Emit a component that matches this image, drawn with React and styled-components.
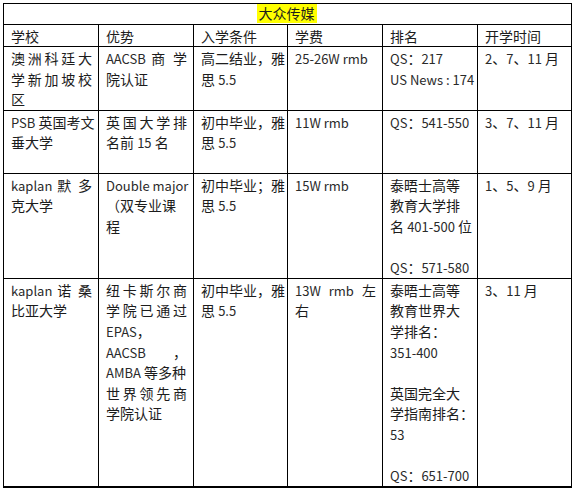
import styled, { createGlobalStyle } from "styled-components";

const GlobalStyle = createGlobalStyle`
  html, body {
    margin: 0;
    padding: 0;
    background: #fff;
  }
  body {
    font-family: "Noto Sans CJK SC", "Noto Sans", sans-serif;
    color: #1c1c1c;
  }
`;

const columns = [95, 95, 94, 95, 95, 94];
const headers = ["学校", "优势", "入学条件", "学费", "排名", "开学时间"];

// each cell is a list of lines; "~" marks a line spread to both edges, "" is a blank line
const rows = [
  {
    height: 63,
    cells: [
      ["~澳洲科廷大", "~学新加坡校", "区"],
      ["~AACSB 商 学", "院认证"],
      ["高二结业，雅", "思 5.5"],
      ["25-26W rmb"],
      ["QS：217", "US News : 174"],
      ["2、7、11 月"],
    ],
  },
  {
    height: 63,
    cells: [
      ["PSB 英国考文", "垂大学"],
      ["~英国大学排", "名前 15 名"],
      ["初中毕业，雅", "思 5.5"],
      ["11W rmb"],
      ["QS：541-550"],
      ["3、7、11 月"],
    ],
  },
  {
    height: 105,
    cells: [
      ["~kaplan 默 多", "克大学"],
      ["Double major", "（双专业课", "程"],
      ["初中毕业；雅", "思 5.5"],
      ["15W rmb"],
      ["泰晤士高等", "教育大学排", "名 401-500 位", "", "QS：571-580"],
      ["1、5、9 月"],
    ],
  },
  {
    height: 209,
    cells: [
      ["~kaplan 诺 桑", "比亚大学"],
      [
        "~纽卡斯尔商",
        "~学院已通过",
        "EPAS，",
        "~AACSB ，",
        "AMBA 等多种",
        "~世界领先商",
        "学院认证",
      ],
      ["初中毕业，雅", "思 5.5"],
      ["~13W rmb 左", "右"],
      [
        "泰晤士高等",
        "教育世界大",
        "学排名：",
        "351-400",
        "",
        "英国完全大",
        "学指南排名：",
        "53",
        "",
        "QS：651-700",
      ],
      ["3、11 月"],
    ],
  },
];

// latin runs are set a size smaller, like Calibri beside the Chinese text
function Runs({ text }) {
  return text
    .split(/([\x21-\x7e][\x20-\x7e]*[\x21-\x7e]|[\x21-\x7e])/)
    .map((part, i) =>
      /[\x21-\x7e]/.test(part) ? <Latin key={i}>{part}</Latin> : part
    );
}

function App() {
  return (
    <>
      <GlobalStyle />
      <Page>
        <Table>
          <colgroup>
            {columns.map((w, i) => (
              <col key={i} style={{ width: w }} />
            ))}
          </colgroup>
          <tbody>
            <TitleRow>
              <TitleCell colSpan={6}>
                <Highlight>大众传媒</Highlight>
              </TitleCell>
            </TitleRow>
            <HeaderRow>
              {headers.map((h) => (
                <HeaderCell key={h}>{h}</HeaderCell>
              ))}
            </HeaderRow>
            {rows.map((row, r) => (
              <BodyRow key={r} $height={row.height}>
                {row.cells.map((lines, c) => (
                  <Cell key={c}>
                    {lines.map((line, l) =>
                      line === "" ? (
                        <Line key={l}>&nbsp;</Line>
                      ) : (
                        <Line key={l} $spread={line.startsWith("~")}>
                          <Runs text={line.replace(/^~/, "")} />
                        </Line>
                      )
                    )}
                  </Cell>
                ))}
              </BodyRow>
            ))}
          </tbody>
        </Table>
      </Page>
    </>
  );
}
export default App;

const Page = styled.div`
  width: 575px;
  height: 490px;
  padding: 3px 0 0 3px;
  box-sizing: border-box;
  background: #fff;
`;

const Table = styled.table`
  border-collapse: collapse;
  table-layout: fixed;
  width: 569px;
  font-size: 14px;
  border: 1px solid #000;
  border-bottom-width: 2px;
`;

const TitleRow = styled.tr`
  height: 21px;
`;

const TitleCell = styled.td`
  border: 1px solid #000;
  text-align: center;
  padding: 0;
  line-height: 19px;
  vertical-align: top;
`;

const Highlight = styled.span`
  display: inline-block;
  background: #ffff00;
  padding: 0 2px;
  margin-left: -2px;
`;

const HeaderRow = styled.tr`
  height: 22px;
`;

const HeaderCell = styled.td`
  border: 1px solid #000;
  padding: 0 6px 0 7px;
  line-height: 20px;
  vertical-align: middle;
`;

const BodyRow = styled.tr`
  height: ${(p) => p.$height}px;
`;

const Cell = styled.td`
  border: 1px solid #000;
  padding: 1px 6px 0 7px;
  vertical-align: top;
  line-height: 20.6px;
`;

const Line = styled.div`
  height: 20.6px;
  white-space: nowrap;
  text-align: left;
  text-align-last: ${(p) => (p.$spread ? "justify" : "auto")};
  text-justify: inter-character;
`;

const Latin = styled.span`
  font-size: 13px;
  line-height: 1;
  color: #2a2a2a;
`;
